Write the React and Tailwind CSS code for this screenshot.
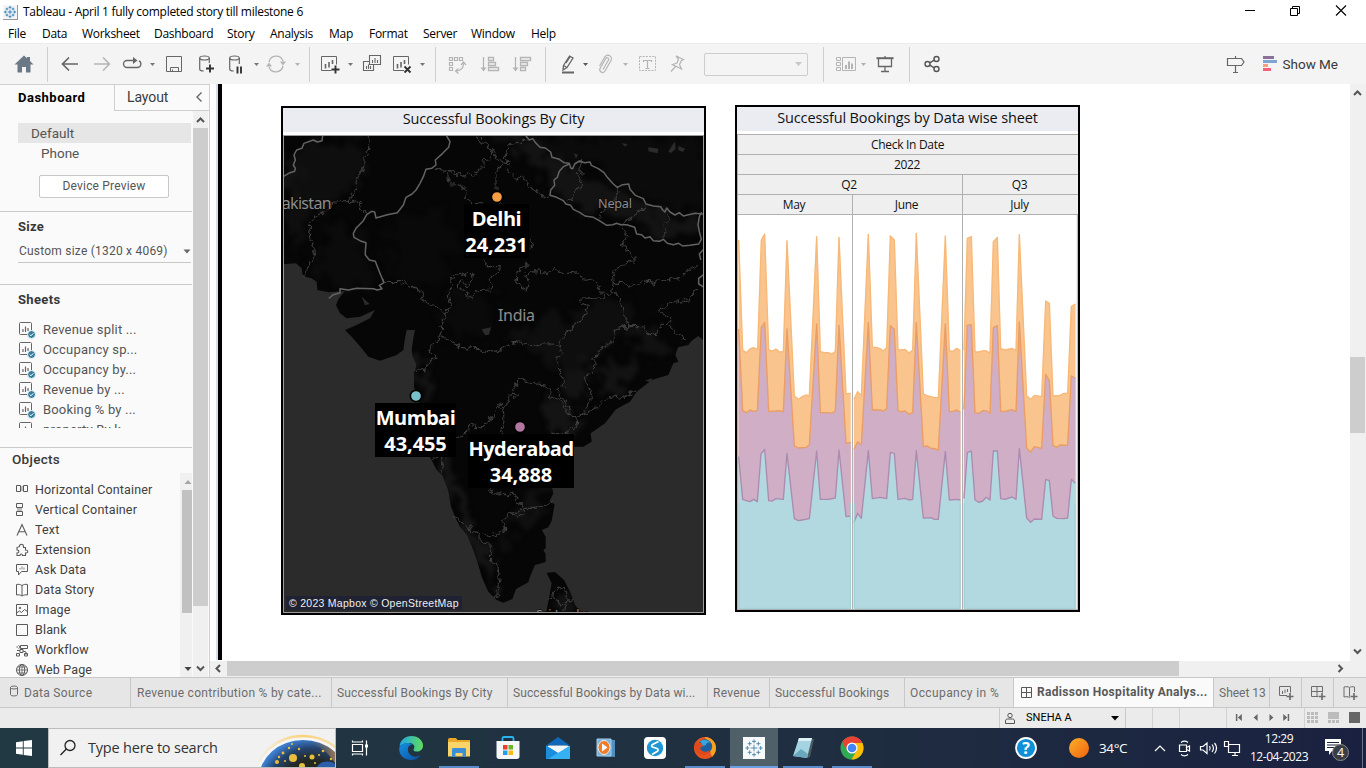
import React from "react";

const SEG = "font-['Open_Sans','Noto_Sans',sans-serif]";
const BEN = "font-['Roboto','Liberation_Sans',sans-serif]";

/* ---------- shared bits ---------- */
function Icon({ className = "", size = 22, children, ...rest }) {
  return (
    <svg width={size} height={size} viewBox={`0 0 ${size} ${size}`} fill="none" stroke="currentColor" className={`block shrink-0 ${className}`} {...rest}>
      {children}
    </svg>
  );
}

function Caret({ className = "text-[#777]" }) {
  return (
    <svg width="12" height="12" viewBox="0 0 12 12" className={`block shrink-0 ${className}`}>
      <path d="M4 5h5L6.500 8z" fill="currentColor" />
    </svg>
  );
}

function Sep({ className = "" }) {
  return <div className={`h-[35px] w-px shrink-0 bg-[#cfcfcf] ${className}`} />;
}

function Slot({ className = "", children }) {
  return <div className={`flex shrink-0 items-center justify-center ${className}`}>{children}</div>;
}

function TableauMark({ className = "", size = 14, weight = 1.5 }) {
  const plus = [
    [12, 12, 4], [12, 4, 2.4], [12, 20, 2.4], [4, 12, 2.4], [20, 12, 2.4],
    [6.8, 6.8, 2.4], [17.2, 6.8, 2.4], [6.8, 17.2, 2.4], [17.2, 17.2, 2.4],
  ];
  return (
    <svg width={size} height={size} viewBox="0 0 24 24" className={`block ${className}`} stroke="currentColor" strokeWidth={weight}>
      {plus.map(([x, y, r], i) => (
        <path key={i} d={`M${x - r} ${y}h${r * 2}M${x} ${y - r}v${r * 2}`} />
      ))}
    </svg>
  );
}

/* ---------- title + menu ---------- */
function TitleBar() {
  return (
    <div className="flex h-6 items-center bg-white pl-[3px]">
      <div className="flex h-[15px] w-[15px] items-center justify-center border-r border-b border-[#999] bg-[#f2f5f8]">
        <TableauMark className="text-[#2f7ab0]" size={14} />
      </div>
      <span className="ml-[5px] text-[12px] leading-6 tracking-[-0.28px] text-black">Tableau - April 1 fully completed story till milestone 6</span>
      <svg width="110" height="20" viewBox="0 0 110 20" className="ml-auto mr-[13px]" fill="none" stroke="#000">
        <path d="M2 8.500h10" />
        <path d="M47.500 6.500h7v7h-7z M49.500 6.500v-2h7v7h-2" />
        <path d="M93 3.500l10 10M103 3.500l-10 10" strokeWidth="1.100" />
      </svg>
    </div>
  );
}

function MenuBar() {
  const items = [
    ["File", "w-[34px]"], ["Data", "w-[40px]"], ["Worksheet", "w-[72px]"], ["Dashboard", "w-[73px]"],
    ["Story", "w-[43px]"], ["Analysis", "w-[59px]"], ["Map", "w-[40px]"], ["Format", "w-[54px]"],
    ["Server", "w-[48px]"], ["Window", "w-[60px]"], ["Help", "w-[40px]"],
  ];
  return (
    <div className="flex h-[19px] items-center bg-white pl-2 text-[12px] tracking-[-0.28px] text-black">
      {items.map(([t, w]) => (
        <span key={t} className={`${w} shrink-0 leading-[19px]`}>{t}</span>
      ))}
    </div>
  );
}

/* ---------- toolbar ---------- */
const chartBox = "M1.500 3.500h15v14h-15z";
function Toolbar() {
  return (
    <div className="flex h-[41px] items-center border-t border-[#ececec] bg-[#f4f4f4] text-[#666]">
      <Slot className="w-[47px]">
        <Icon><path d="M11 2.500L1.500 11.500H4.500V19.500H9V14H13V19.500H17.500V11.500H20.500L17 8V4h-3v1.300z" fill="#6b7886" stroke="none" /></Icon>
      </Slot>
      <Sep />
      <Slot className="ml-1.5 w-8"><Icon strokeWidth="1.700"><path d="M19 11H3.500M10 4.500L3.500 11l6.500 6.500" /></Icon></Slot>
      <Slot className="w-8 text-[#b4b4b4]"><Icon strokeWidth="1.500"><path d="M3 11h15.500M12 4.500l6.500 6.500-6.500 6.500" /></Icon></Slot>
      <Slot className="w-7"><Icon strokeWidth="1.300"><path d="M14 7.500H6a3.500 3.500 0 0 0 0 7h10.500a3.500 3.500 0 0 0 1.500-6.600" /><path d="M12 4l4.500 3.500-4.500 3.500z" fill="currentColor" stroke="none" /></Icon></Slot>
      <Caret />
      <Slot className="w-8"><Icon><path d="M3.500 3.500h15v15h-15z M7.500 18.500v-4h8v4 M9.500 18.500v-2" /></Icon></Slot>
      <Slot className="w-8"><Icon strokeWidth="1.200"><ellipse cx="9.500" cy="5" rx="4.800" ry="2" /><path d="M4.700 5v11c0 1 1 2 4 2M14.300 5v5" /><path d="M15 11.500v8M11 15.500h8" stroke="#333" strokeWidth="1.900" /></Icon></Slot>
      <Slot className="w-7"><Icon strokeWidth="1.200"><ellipse cx="9.500" cy="5" rx="4.800" ry="2" /><path d="M4.700 5v11c0 1 1 2 4 2M14.300 5v6" /><path d="M12.500 13.500v7M16 13.500v7" stroke="#333" strokeWidth="1.900" /></Icon></Slot>
      <Caret />
      <Slot className="w-7 text-[#b4b4b4]"><Icon strokeWidth="1.300"><path d="M4 9a7.300 7.300 0 0 1 14-1M18 13a7.300 7.300 0 0 1-14 1" /><path d="M15 8.500h6l-3 4zM1 13.500h6l-3-4z" fill="currentColor" stroke="none" /></Icon></Slot>
      <Caret className="ml-px text-[#b4b4b4]" />
      <Sep className="ml-1.5" />
      <Slot className="ml-1.5 w-7"><Icon><path d="M12.500 17.500H2.500v-14h15v8" /><path d="M6.500 11v4.500M10 9v5.500M13.500 7v4" strokeWidth="1.600" /><path d="M16.500 12.500v8M12.500 16.500h8" stroke="#333" strokeWidth="1.900" /></Icon></Slot>
      <Caret />
      <Slot className="ml-0.5 w-7"><Icon strokeWidth="1.100"><path d="M8.500 2.500h11v9h-11z M8.500 8.500h-6v9h10v-6" /><path d="M11.500 7v3M14 5v5M16.500 7v3M5.500 13v3M7.500 11.500v4.500M9.500 13v3" /></Icon></Slot>
      <Slot className="ml-0.5 w-7"><Icon><path d="M13 17.500H2.500v-14h15v8" /><path d="M6.500 11v4.500M10 9v5.500M13.500 7v4" strokeWidth="1.600" /><path d="M13.500 13.500l6 6M19.500 13.500l-6 6" stroke="#333" strokeWidth="1.900" /></Icon></Slot>
      <Caret />
      <Sep className="ml-[7px]" />
      <Slot className="ml-[7px] w-7 text-[#b4b4b4]"><Icon strokeWidth="1.200"><path d="M3.500 4.500h3v3h-3zM8.500 4.500h3v3h-3zM13.500 4.500h3v3h-3zM3.500 9.500h3v3h-3zM3.500 14.500h3v3h-3z" /><path d="M17.500 10.500c0 5-2 7-7 7.500M15 12l2.500-3 2.500 3M12.500 15.500l-3 2.500 3 2.500" /></Icon></Slot>
      <Slot className="ml-[5px] w-7 text-[#b4b4b4]"><Icon strokeWidth="1.300"><path d="M4.500 4v13M9.500 4.500h5v3h-5zM9.500 9.500h7v3h-7zM9.500 14.500h10v3h-10z" /><path d="M1.500 14.500h6l-3 4z" fill="currentColor" stroke="none" /></Icon></Slot>
      <Slot className="ml-1 w-7 text-[#b4b4b4]"><Icon strokeWidth="1.300"><path d="M4.500 4v13M9.500 4.500h10v3h-10zM9.500 9.500h7v3h-7zM9.500 14.500h5v3h-5z" /><path d="M1.500 14.500h6l-3 4z" fill="currentColor" stroke="none" /></Icon></Slot>
      <Sep className="ml-[9px]" />
      <Slot className="ml-[11px] w-[22px]"><Icon strokeWidth="1.300"><path d="M6.500 12.500l6-9.500 3.500 2-6 9.500-4 2.500zM6.500 12.500l3.500 2M9 10l4-6" /><path d="M5 19.500h12" strokeWidth="2" /></Icon></Slot>
      <Caret className="text-[#555]" />
      <Slot className="ml-[3px] w-[22px] text-[#b4b4b4]"><Icon strokeWidth="1.200"><path d="M9 16.500l5.500-9.500a1.500 1.500 0 0 0-2.700-1.500L6 15.500a2.800 2.800 0 0 0 5 2.500l6-10.500a3.500 3.500 0 0 0-6.200-3.500L5.500 13" /></Icon></Slot>
      <Caret className="ml-[3px] text-[#b4b4b4]" />
      <Slot className="ml-[5px] w-[22px] text-[#b4b4b4]"><Icon><path d="M3.500 3.500h16v14h-16z" strokeDasharray="2 1.200" /><path d="M7.500 9V7.500h8V9M11.500 7.500v8M9.500 15.500h4" strokeWidth="1.200" /></Icon></Slot>
      <Slot className="ml-2 w-[22px] text-[#b4b4b4]"><Icon strokeWidth="1.200"><path d="M10 3l7.500 3.500-2 1-2 4 2 4.500-9-4.500 4.500-1.500 1.500-4zM9.500 13.500L5 18.500" /></Icon></Slot>
      <div className="ml-4 flex h-[23px] w-[104px] shrink-0 items-center justify-end rounded-[2px] border border-[#cdcdcd] pr-[4px]">
        <svg width="9" height="6" viewBox="0 0 9 6"><path d="M1 1h7L4.500 5z" fill="#c6c6c6" /></svg>
      </div>
      <Sep className="ml-[15px]" />
      <Slot className="ml-3 w-[22px] text-[#b4b4b4]"><Icon><path d="M.5 4.500h4v3h-4zM.5 9.500h4v3h-4zM.5 14.500h4v3h-4zM6.500 4.500h13v13h-13z" /><path d="M10 12v4M13 8.500V16M16 10.500V16" strokeWidth="2" /></Icon></Slot>
      <Caret className="-ml-px text-[#b0b0b0]" />
      <Slot className="ml-[5px] w-[22px]"><Icon strokeWidth="1.300"><path d="M2.500 5.200h17" strokeWidth="2" /><path d="M4.500 6v7.500h13V6M11 13.500v5M7 18.500h8M11 3v2" /></Icon></Slot>
      <Sep className="ml-[13px]" />
      <Slot className="ml-[11px] w-[22px] text-[#555]"><Icon strokeWidth="1.400"><circle cx="6.500" cy="11" r="2.500" /><circle cx="15.500" cy="6" r="2.500" /><circle cx="15.500" cy="16" r="2.500" /><path d="M8.700 9.800l4.600-2.600M8.700 12.200l4.600 2.600" /></Icon></Slot>
      <Slot className="ml-auto w-[22px]"><Icon><path d="M3.500 5.500h14l2.500 3.500-2.500 3.500h-14zM11.500 3v2.500M11.500 12.500v7M9 19.500h5" strokeWidth="1.200" /></Icon></Slot>
      <svg width="16" height="16" viewBox="0 0 16 16" className="ml-[16px]">
        <path d="M1 0h11v3H1z" fill="#8b719a" /><path d="M1 4h14v3H1z" fill="#7fa3d2" /><path d="M1 8h5v3H1z" fill="#f4a07f" /><path d="M1 12h8v3H1z" fill="#f4617a" />
      </svg>
      <span className={`mr-[28px] ml-[5px] text-[13.500px] leading-[18px] tracking-[-0.02px] text-[#383838] ${BEN}`}>Show Me</span>
    </div>
  );
}

/* ---------- left panel ---------- */
function SheetIcon() {
  return (
    <svg width="18" height="18" viewBox="0 0 18 18" fill="none" className="block shrink-0">
      <rect x="1.500" y="1.500" width="12" height="12" rx="1" stroke="#666" />
      <path d="M5 8v3M7.500 5.500V11M10 7v3" stroke="#666" strokeWidth="1.200" />
      <circle cx="13.500" cy="13.500" r="4" fill="#35809f" stroke="#fafafa" />
      <path d="M11.700 13.500l1.300 1.300 2.300-2.500" stroke="#fff" strokeWidth="1" />
    </svg>
  );
}

const objectIcons = {
  h: <><path d="M1.500 2.500h4v6h-4zM8.500 2.500h4v6h-4z" /><path d="M6 3h2v5H6z" fill="#bbb" stroke="none" /></>,
  v: <><path d="M1.500.5h6v4h-6zM1.500 8.500h6v4h-6z" /><path d="M2 5h5v3H2z" fill="#bbb" stroke="none" /></>,
  t: <path d="M2 12.500L7 1.500l5 11M4 8.800h6" strokeWidth="1.100" />,
  e: <path d="M4.500 3.500c0-3 4-3 4 0v1h2v2.500c3-.5 3 3.500 0 3v2.500h-3c0-2-2.500-2-2.500 0h-3V10c2.500 0 2.500-3 0-3V4.500z" strokeWidth="1.100" />,
  a: <><path d="M1.500 1.500h11v7h-6l-3 3.500v-3.500h-2z" /><path d="M5 6.500V5M7 6.500V3.500M9 6.500V4.500" stroke="#aaa" strokeWidth="1.500" /></>,
  d: <path d="M1.500 1.500c2-.5 4 0 5.500 1 1.500-1 3.500-1.500 5.500-1v10.500c-2-.5-4 0-5.500 1-1.500-1-3.500-1.500-5.500-1zM7 2.500V12.500" />,
  i: <><path d="M1.500 1.500h11v11h-11zM1.500 10l3-2 2 1.500 3-3 3 2" /><circle cx="5" cy="5" r=".8" /></>,
  b: <path d="M1.500 1.500h11v11h-11z" />,
  w: <path d="M5.500 2.500h7v3h-7zM3 4H1.500M3.500 2.500l2 1.500-2 1.500M2 7.500h3M5 6.500h3v3H5zM8 8l3 1v3M1.500 10.500h3v2.500h-3zM9.500 10.500h3v2.500h-3z" />,
  g: <><circle cx="7" cy="7" r="5.500" /><ellipse cx="7" cy="7" rx="2.700" ry="5.500" /><path d="M1.500 7h11M7 1.500v11M2.500 4h9M2.500 10h9" strokeWidth=".8" /></>,
};

function LeftPanel() {
  const sheets = ["Revenue split ...", "Occupancy sp...", "Occupancy by...", "Revenue by ...", "Booking % by ...", "property By k..."];
  const objects = [
    ["h", "Horizontal Container"], ["v", "Vertical Container"], ["t", "Text"], ["e", "Extension"], ["a", "Ask Data"],
    ["d", "Data Story"], ["i", "Image"], ["b", "Blank"], ["w", "Workflow"], ["g", "Web Page"],
  ];
  return (
    <div className={`flex h-[593px] w-[210px] shrink-0 flex-col border-t border-r border-[#d0d0d0] bg-[#fafafa] text-[13px] text-[#555] ${BEN}`}>
      <div className="flex h-[26px] shrink-0">
        <div className="w-[114px] pl-[18px] text-[13px] leading-[25px] font-bold tracking-[0.5px] text-black">Dashboard</div>
        <div className="flex flex-1 items-center border-b border-l border-[#cfcfcf] bg-[#fafafa] pl-3 text-[14px] tracking-[-0.1px] text-[#3c3c3c]">
          Layout
          <svg width="8" height="12" viewBox="0 0 8 12" className="mr-[6px] mb-[2px] ml-auto" fill="none" stroke="#666" strokeWidth="1.400"><path d="M6.500 1.500L2 6l4.500 4.500" /></svg>
        </div>
      </div>
      <div className="flex min-h-0 flex-1">
        <div className="flex w-[192px] flex-col overflow-hidden">
          <div className="mt-3 ml-[18px] h-5 w-[173px] shrink-0 bg-[#e6e6e6] pl-[13px] text-[13.500px] leading-[20px]">Default</div>
          <div className="h-5 shrink-0 pl-[41px] text-[13.500px] leading-[20px]">Phone</div>
          <div className="mt-3 ml-[39px] h-[23px] w-[130px] shrink-0 rounded-[2px] border border-[#c8c8c8] bg-white text-center text-[12px] leading-[21px] tracking-[0.18px]">Device Preview</div>
          <div className="mt-[13px] h-[73px] shrink-0 border-t border-[#cacaca] pt-[5px]">
            <div className="pl-[18px] text-[13px] leading-[20px] font-bold tracking-[0.3px] text-[#383838]">Size</div>
            <div className="mt-[4px] ml-[18px] flex h-[22px] w-[173px] items-center border-b border-[#c8c8c8] pb-px pl-px text-[12px] tracking-[0.22px]">
              Custom size (1320 x 4069)
              <svg width="8" height="5" viewBox="0 0 8 5" className="ml-auto"><path d="M.5.500h7L4 4.500z" fill="#666" /></svg>
            </div>
          </div>
          <div className="h-[163px] shrink-0 border-t border-[#cacaca] pt-[5px]">
            <div className="pl-[18px] text-[13px] leading-[20px] font-bold tracking-[0.35px] text-[#383838]">Sheets</div>
            <div className="mt-[10px] h-[108px] overflow-hidden">
              {sheets.map((s) => (
                <div key={s} className="flex h-5 items-center pl-[18px] text-[13px] tracking-[0.18px]">
                  <SheetIcon />
                  <span className="ml-[7px]">{s}</span>
                </div>
              ))}
            </div>
          </div>
          <div className="flex min-h-0 flex-1 flex-col border-t border-[#cacaca]">
            <div className="h-[25px] shrink-0 pl-3 text-[13.500px] leading-[23px] font-medium tracking-[0.3px] text-[#383838]">Objects</div>
            <div className="flex min-h-0 flex-1">
              <div className="w-[180px] overflow-hidden pt-[7px]">
                {objects.map(([k, t]) => (
                  <div key={k} className="flex h-5 items-center pl-[15px] text-[12.500px] tracking-[0.15px] text-[#404040]">
                    <Icon size={14} className="text-[#5a5a5a]">{objectIcons[k]}</Icon>
                    <span className="ml-[6px] whitespace-nowrap">{t}</span>
                  </div>
                ))}
              </div>
              <div className="flex w-3 flex-col items-end bg-[#f0f0f0]">
                <svg width="10" height="17" viewBox="0 0 10 17"><path d="M2.500 11h7L6 7z" fill="#a5a5a5" /></svg>
                <div className="h-[123px] w-[10px] bg-[#c1c1c1]" />
                <svg width="10" height="17" viewBox="0 0 10 17" className="mt-auto"><path d="M2.500 7h7L6 11z" fill="#444" /></svg>
              </div>
            </div>
          </div>
        </div>
        <div className="ml-px flex w-[15px] flex-col items-center bg-[#f0f0f0]">
          <svg width="15" height="17" viewBox="0 0 15 17" fill="none" stroke="#555" strokeWidth="2"><path d="M4 11l3.500-3.500L11 11" /></svg>
          <div className="h-[478px] w-full bg-[#cdcdcd]" />
          <svg width="15" height="17" viewBox="0 0 15 17" className="mt-auto" fill="none" stroke="#555" strokeWidth="2"><path d="M4 6.500L7.500 10 11 6.500" /></svg>
        </div>
      </div>
    </div>
  );
}

/* ---------- map ---------- */
const LAND =
  "M12 100V492L48 490L65 505L68 528L95 535L110 545L112 570L145 577L195 573L175 598L168 615L180 640L200 655L240 650L285 630L270 655L230 675L195 690L215 710L245 745L265 770L300 782L350 765L370 750L375 715L380 690L405 690L400 715L395 750L398 768L410 795L402 820L402 860L410 885L425 935L432 990L450 1070L470 1110L487 1125L505 1170L513 1220L525 1250L540 1280L562 1305L580 1350L590 1378L605 1430L625 1475L650 1500L670 1508L697 1497L708 1467L745 1447L750 1430L765 1395L797 1386L797 1362L790 1350L797 1345L797 1310L785 1290L805 1282L815 1262L824 1212L808 1205L820 1180L815 1160L817 1130L840 1080L880 1040L910 1040L935 1025L932 1000L975 970L1008 928L1050 905L1070 875L1115 840L1165 825L1180 790L1195 785L1186 765L1194 742L1225 735L1235 722L1255 708L1269 720V100Z M800 1418L825 1416L852 1440L870 1475L885 1515L905 1540H798L808 1490L815 1450L806 1432Z";

const COUNTRY = [
  "M128 108L126 122L112 126L100 120L72 130L66 145L50 150L42 165L46 180L40 195L46 205L44 214L30 218L12 228",
  "M500 108L510 125L506 142L488 160L466 180L468 195L455 205L438 208L430 230L420 250L408 270L396 282L378 292L370 315L352 338L322 344L288 354L284 336L275 334L260 344L250 362L228 385L220 400L222 412L240 422L258 428L256 455L256 465L268 480L286 484L294 505L302 525L312 548L298 556L306 566L292 570L280 566L230 565L205 570L180 566L180 578L160 584L148 594",
  "M738 108L748 120L758 116L768 130L780 142L796 144L812 156L816 172L838 178L852 188L868 190L872 204L878 206L884 192L898 183L914 188L930 186L934 196L955 206L972 218L982 232L1000 252L1012 262L1028 254L1046 252L1050 268L1066 286L1090 296L1098 312L1120 318L1142 320L1148 330L1155 336L1160 324L1170 336L1185 345L1198 338L1210 348L1245 340L1269 342",
  "M868 192L850 200L838 214L832 232L822 240L824 256L812 270L810 286L830 292L850 302L858 312L872 316L880 328L900 338L915 348L940 352L958 362L980 376L998 374L1010 370L1022 374L1040 374L1064 382L1070 402L1085 404L1095 414L1110 410L1120 422L1138 424L1150 418L1162 430L1180 434L1196 430L1208 438L1230 436L1256 432L1264 418L1258 395L1254 374L1258 350L1264 338",
  "M1269 450L1258 462L1262 478M1269 525L1256 535L1256 552L1269 560",
];

const STATES = [
  "M268 108L265 160L255 180L248 215L228 238L230 262L215 290L210 304L160 306L150 325L130 340L108 344L92 370L88 410L100 440L105 470L85 500L68 528",
  "M210 304L240 308L242 325L260 342",
  "M590 108L602 124L620 128L636 150L632 175L610 180L608 204L595 204L580 226L562 222L540 232L530 218L515 212L466 208",
  "M515 212L500 224L505 250L548 258L554 275L555 290L575 308L640 320L660 305L668 315",
  "M625 135L640 155L655 180L670 185L690 190L682 210L690 220L706 234L730 232L745 255L760 270L785 284L810 290",
  "M738 118L710 130L684 135L678 165L684 190L665 190L648 215L648 268",
  "M898 184L904 218L886 222L906 240L902 262L880 280L872 296L862 300",
  "M1010 262L1004 300L980 325L964 345L955 360M1098 318L1060 348L1030 370M1160 340L1168 355L1154 375L1155 415",
  "M1022 376L1040 410L1026 435L1040 446L1068 480L1052 480L1030 495L996 515L1000 550L995 575L968 592L920 590L898 602L925 620L905 660L865 690L840 730L845 760L828 780L840 815L856 850L830 870L850 895L875 950L895 950",
  "M310 545L360 545L400 560L425 575L430 600L458 620L485 628L495 650L485 680L480 712L460 730L448 752L470 770L440 795L435 815L405 810",
  "M495 640L515 620L505 590L515 550L518 525L545 520L560 528L575 518L580 540L560 560L540 540L535 560L560 580L572 594L590 572L635 570L630 535L655 518L658 500L625 500L610 480M752 418L758 436L750 450",
  "M480 710L530 730L535 742L590 745L620 758L655 752L680 738L720 725L755 740L805 728L840 740",
  "M742 485L732 500L712 515L708 545L740 572L746 550L732 520L760 515L800 520L822 505L850 522L895 515L915 540L950 545L962 575",
  "M1000 550L1030 550L1055 562L1090 545L1120 550L1160 535L1195 540L1230 505L1250 500",
  "M1000 575L1024 600L1030 640L1048 680L1010 685L1000 725L965 740L942 780L940 820L910 825L935 880L925 920L895 950L950 920L990 890L1020 895L1065 875",
  "M1250 570L1220 600L1170 610L1135 628L1175 660L1175 690L1220 725M1030 680L1060 680L1090 680L1100 700L1130 700L1145 675L1172 665",
  "M530 1010L562 1000L566 975L605 985L635 950L650 920L680 915L700 870L715 835L750 850L800 855L812 890L842 900L860 940L895 955L890 980L860 1000L815 1000",
  "M668 920L672 960L665 998M685 885L700 880L718 886L700 896",
  "M520 1247L560 1280L600 1305L630 1310L660 1300L680 1285L668 1265L690 1240L725 1250L735 1225L765 1225L800 1215L815 1205",
  "M635 1165L640 1190L660 1180L680 1190L700 1180L720 1215L728 1230L700 1240",
  "M600 1310L600 1325L630 1330L632 1385L652 1390L658 1430L650 1490",
  "M460 1075L480 1070L490 1095L485 1120M805 1500L830 1470L855 1460L865 1500L850 1536M820 1490L845 1515L880 1500",
];

const PATCHES = [
  ["M20 190L100 110L250 108L255 200L210 290L110 330L90 400L20 480Z", "#0e0e0e"],
  ["M12 150L60 240L40 330L20 300Z", "#121212"],
  ["M120 350L200 360L260 470L300 545L180 565L100 530Z", "#0b0b0b"],
  ["M640 140L720 150L800 250L870 310L960 350L1050 370L1240 425L1250 350L1100 320L1000 265L880 200L740 112L640 108Z", "#131313"],
  ["M760 108H1269V330L1090 290L1000 240L890 180L830 170Z", "#0b0b0b"],
  ["M330 380L460 330L540 380L520 480L420 560L330 540Z", "#090909"],
  ["M480 640L560 570L640 590L600 700L500 710Z", "#0a0a0a"],
  ["M680 700L780 660L880 650L920 610L990 590L1060 600L1050 680L1000 730L940 760L930 830L880 860L840 800L760 760Z", "#0e0e0e"],
  ["M850 820L900 770L930 800L920 900L880 930Z", "#131313"],
  ["M950 800L1040 770L1090 780L1060 850L990 880L960 860Z", "#131313"],
  ["M1060 700L1120 680L1170 700L1130 760L1070 750Z", "#111"],
  ["M790 910L840 910L870 960L930 960L890 1000L820 990Z", "#141414"],
  ["M410 770L450 780L445 850L460 960L530 1110L570 1240L620 1330L650 1400L640 1490L610 1420L560 1300L510 1200L470 1100L430 980Z", "#151515"],
  ["M720 1165L800 1165L780 1250L710 1270L680 1250L720 1220Z", "#101010"],
  ["M650 1320L700 1300L700 1350L660 1380Z", "#0d0d0d"],
  ["M825 1480L865 1475L880 1536H820Z", "#131313"],
];

const LAKES =
  "M1025 130l18 2-8 8zM1105 142l30 4-2 14-28-6zM1165 155l12-20 8-10 2 22-14 12zM1195 138l20 8-6 10-14-6zM882 160l12 4-6 12zM605 688l28-6-6 22-12 2zM245 590l24 22-14 4zM955 572l22 4-14 10zM735 486l16 10-16 12zM1095 842l22-8-6 12zM640 1180l26-6-6 14z";

function PlaceLabel({ name, value, className }) {
  return (
    <div className={`absolute flex flex-col items-center bg-black text-[20px] leading-[26px] font-bold text-white ${className}`}>
      <span className="tracking-[-0.5px]">{name}</span>
      <span className="tracking-[-0.1px]">{value}</span>
    </div>
  );
}

function MapPanel() {
  return (
    <div className="flex h-[509px] w-[425px] flex-col border-2 border-black bg-white">
      <div className="h-6 bg-[#ebecf1] text-center text-[14.500px] leading-[22px] tracking-[-0.13px] text-[#111]">Successful Bookings By City</div>
      <div className="relative mt-[3px] h-[478px] w-[421px] overflow-hidden border border-[#9c9c9c] bg-[#2b2b2b]">
        <svg width="419" height="476" viewBox="12 108 1257 1428" className="block" strokeLinejoin="round" strokeLinecap="round">
          <defs>
            <clipPath id="land"><path d={LAND} /></clipPath>
            <filter id="soft" filterUnits="userSpaceOnUse" x="-50" y="50" width="1400" height="1550" colorInterpolationFilters="sRGB">
              <feTurbulence type="fractalNoise" baseFrequency=".018" numOctaves="3" seed="8" result="n" />
              <feDisplacementMap in="SourceGraphic" in2="n" scale="130" xChannelSelector="R" yChannelSelector="G" />
              <feGaussianBlur stdDeviation="6" />
            </filter>
            <filter id="rough" filterUnits="userSpaceOnUse" x="-50" y="50" width="1400" height="1550" colorInterpolationFilters="sRGB">
              <feTurbulence type="fractalNoise" baseFrequency=".06" numOctaves="2" seed="3" result="n" />
              <feDisplacementMap in="SourceGraphic" in2="n" scale="26" xChannelSelector="R" yChannelSelector="G" />
            </filter>
          </defs>
          <path d={LAND} fill="#060606" />
          <g clipPath="url(#land)">
            <g filter="url(#soft)">
              {PATCHES.map(([d, c], i) => <path key={i} d={d} fill={c} />)}
            </g>
          </g>
          <path d={LAKES} fill="#2b2b2b" />
          <g fill="none" stroke="#3d3d3d" strokeWidth="3.300" filter="url(#rough)">
            {STATES.map((d, i) => <path key={i} d={d} />)}
          </g>
          <g fill="none" stroke="#636363" strokeWidth="4.500">
            {COUNTRY.map((d, i) => <path key={i} d={d} />)}
          </g>
          <g fill="#8c8c8c" stroke="#0a0a0a" strokeWidth="4" paintOrder="stroke" fontFamily="Noto Sans, Open Sans, sans-serif">
            <text x="-22" y="326" fontSize="48" textLength="177">Pakistan</text>
            <text x="954" y="323" fontSize="38" textLength="102">Nepal</text>
            <text x="654" y="664" fontSize="48" textLength="111">India</text>
            <text x="768" y="1557" fontSize="38">Sri Lanka</text>
          </g>
          <g stroke="#000" strokeWidth="5">
            <circle cx="651" cy="291" r="17" fill="#f79d42" />
            <circle cx="408" cy="888" r="17" fill="#7ac0cb" />
            <circle cx="720" cy="981" r="17" fill="#b177a0" />
          </g>
        </svg>
        <PlaceLabel name="Delhi" value="24,231" className="top-[68px] left-[180px] h-[54px] w-[65px] pt-[2px]" />
        <PlaceLabel name="Mumbai" value="43,455" className="top-[267px] left-[91px] h-[54px] w-[81px] pt-[2px]" />
        <PlaceLabel name="Hyderabad" value="34,888" className="top-[298px] left-[184px] h-[54px] w-[106px] pt-[2px]" />
        <div className="absolute bottom-[2px] left-[2px] h-[14px] w-[176px] bg-[#1f2232] pl-[3px] font-['Liberation_Sans',sans-serif] text-[10.500px] leading-[14px] tracking-[0.27px] whitespace-nowrap text-[#eee]">© 2023 Mapbox © OpenStreetMap</div>
      </div>
    </div>
  );
}

/* ---------- area chart ---------- */
const MONTHS = [
  {
    o: "26,420 38,750 49,758 60,747 71,743 83,748 94,420 104,402 116,750 127,753 138,747 149,756 160,755 171,422 193,888 206,898 216,890 228,885 238,888 260,410 271,755 283,758 295,758 305,762 316,755 327,412 348,882 360,880 362,880",
    p: "26,687 38,932 49,938 60,930 71,934 82,932 94,682 104,668 116,934 138,933 149,932 160,936 171,687 193,1038 205,1044 228,1042 238,1035 260,672 271,938 295,938 305,940 316,932 327,676 348,1030 362,1027",
    t: "26,1070 38,1198 49,1202 60,1205 71,1198 82,1205 93,1062 104,1048 116,1202 127,1203 138,1196 160,1198 171,1060 193,1256 205,1262 216,1260 238,1256 260,1053 271,1198 295,1198 316,1194 327,1050 348,1250 362,1248",
    l: 26, r: 362,
  },
  {
    o: "372,897 383,875 394,887 415,403 427,742 438,742 450,746 460,753 470,742 481,408 493,420 504,750 515,750 525,748 537,760 548,750 559,400 580,882 592,887 613,893 625,893 646,408 658,752 669,754 680,745 691,752",
    p: "372,1048 383,1025 394,1035 415,668 427,930 450,930 460,933 470,926 481,677 493,688 504,932 515,935 525,933 537,943 548,938 559,668 580,1040 592,1038 604,1046 613,1045 625,1051 646,672 658,935 669,934 680,930 691,936",
    t: "372,1267 383,1240 394,1255 415,1052 427,1196 450,1192 470,1196 481,1057 493,1060 504,1198 525,1195 537,1200 548,1198 559,1052 580,1254 604,1253 613,1258 625,1258 646,1054 658,1200 680,1198 691,1200",
    l: 372, r: 691,
  },
  {
    o: "702,750 712,415 724,410 735,756 747,756 760,752 770,753 780,760 790,425 802,412 812,746 825,750 846,745 858,752 868,404 890,888 902,898 913,886 935,890 947,603 958,610 969,888 990,886 1002,880 1013,880 1024,620 1036,612",
    p: "702,928 712,676 724,674 735,938 747,940 758,932 769,932 780,940 790,683 802,677 812,934 825,934 846,929 858,935 868,666 890,1045 902,1056 913,1040 935,1045 947,823 958,842 969,1036 980,1042 990,1035 1013,1036 1024,828 1036,834",
    t: "702,1195 712,1058 724,1053 735,1200 747,1207 758,1203 769,1192 780,1200 790,1053 802,1053 812,1196 825,1198 846,1191 858,1198 868,1046 890,1254 902,1267 913,1257 935,1258 947,1138 958,1142 969,1248 980,1255 1002,1256 1013,1254 1024,1138 1036,1150",
    l: 702, r: 1036,
  },
];

function Series({ pts, l, r, fill, stroke }) {
  return (
    <>
      <polygon points={`${l},1526 ${pts} ${r},1526`} fill={fill} stroke={fill} strokeWidth="1" />
      <polyline points={pts} fill="none" stroke={stroke} strokeWidth="4" />
    </>
  );
}

function ChartPanel() {
  const cell = "border-b border-[#b0b0b0] bg-[#efefef] text-center leading-[19px]";
  return (
    <div className="flex h-[507px] w-[345px] flex-col border-2 border-black bg-white">
      <div className="h-6 bg-[#ebecf1] text-center text-[14.500px] leading-[22px] tracking-[-0.14px] text-[#111]">Successful Bookings by Data wise sheet</div>
      <div className="mt-[3px] grid h-[81px] grid-cols-[115px_110px_115px] grid-rows-4 border-t border-r border-l border-[#b0b0b0] text-[12px] tracking-[-0.3px] text-[#111]">
        <div className={`${cell} col-span-3 pr-px`}>Check In Date</div>
        <div className={`${cell} col-span-3 pr-[2px]`}>2022</div>
        <div className={`${cell} col-span-2 border-r pr-[2px]`}>Q2</div>
        <div className={`${cell} pr-[2px]`}>Q3</div>
        <div className={`${cell} border-r pr-[2px]`}>May</div>
        <div className={`${cell} border-r pr-[2px]`}>June</div>
        <div className={`${cell} pr-[2px]`}>July</div>
      </div>
      <svg width="341" height="395" viewBox="21 345 1023 1185" className="block" strokeLinejoin="round">
        {MONTHS.map((m) => (
          <g key={m.l}>
            <Series pts={m.o} l={m.l} r={m.r} fill="#f9c48d" stroke="#f8b978" />
            <Series pts={m.p} l={m.l} r={m.r} fill="#cfaec6" stroke="#ea9e64" />
            <Series pts={m.t} l={m.l} r={m.r} fill="#b2d9df" stroke="#ac8bb0" />
            <path d={`M${m.l + 1} 1210V1525H${m.r - 1}V1210`} fill="none" stroke="#9fd0d7" strokeWidth="3" />
          </g>
        ))}
        <path d="M22.500 345V1530M367.500 345V1530M697.500 345V1530M1042 345V1530M21 1528.500H1044" stroke="#b0b0b0" strokeWidth="3" fill="none" />
      </svg>
    </div>
  );
}

/* ---------- canvas ---------- */
function Canvas() {
  return (
    <div className="flex h-[593px] flex-1 flex-col bg-white">
      <div className="flex h-[577px]">
        <div className="ml-[6px] h-[576px] w-[2px] shrink-0 bg-[#d3dfee]" />
        <div className="h-[576px] w-[4px] shrink-0 bg-black" />
        <div className="pt-[22px] pl-[59px]"><MapPanel /></div>
        <div className="pt-[21px] pl-[29px]"><ChartPanel /></div>
        <div className="ml-auto flex h-[577px] w-4 flex-col bg-[#f0f0f0]">
          <svg width="16" height="17" viewBox="0 0 16 17" fill="none" stroke="#555" strokeWidth="2"><path d="M4 11l3.500-3.500L11 11" /></svg>
          <div className="mt-[256px] h-[76px] w-[15px] bg-[#cdcdcd]" />
          <svg width="16" height="17" viewBox="0 0 16 17" className="mt-auto" fill="none" stroke="#555" strokeWidth="2"><path d="M4 5.500L7.500 9 11 5.500" /></svg>
        </div>
      </div>
      <div className="flex h-4 items-center bg-[#f0f0f0]">
        <svg width="17" height="16" viewBox="0 0 17 16" fill="none" stroke="#555" strokeWidth="2"><path d="M10 4L6.500 7.500 10 11" /></svg>
        <div className="mb-px h-[15px] w-[952px] bg-[#cdcdcd]" />
        <svg width="17" height="16" viewBox="0 0 17 16" className="mr-4 ml-auto" fill="none" stroke="#555" strokeWidth="2"><path d="M5.500 4L9 7.500 5.500 11" /></svg>
      </div>
    </div>
  );
}

/* ---------- sheet tabs ---------- */
function SheetTabs() {
  const tab = "flex h-full shrink-0 items-center border-r border-[#c8c8c8] whitespace-nowrap";
  return (
    <div className={`flex h-[31px] border-t border-b border-[#c8c8c8] bg-[#e6e6e6] text-[12px] text-[#6c6c6c] ${BEN}`}>
      <div className={`${tab} w-[131px] pl-2 tracking-[0.3px]`}>
        <Icon size={12} className="mb-[3px]"><path d="M2.500 2.500v7a3.500 1.500 0 0 0 7 0v-7M2.500 2.500a3.500 1.500 0 0 1 7 0a3.500 1.500 0 0 1-7 0" /></Icon>
        <span className="ml-[4px]">Data Source</span>
      </div>
      <div className={`${tab} w-[201px] pl-[6px] tracking-[0.28px]`}>Revenue contribution % by cate...</div>
      <div className={`${tab} w-[176px] pl-[5px] tracking-[0.17px]`}>Successful Bookings By City</div>
      <div className={`${tab} w-[200px] pl-[5px] tracking-[0.1px]`}>Successful Bookings by Data wi...</div>
      <div className={`${tab} w-[62px] pl-[5px] tracking-[0.25px]`}>Revenue</div>
      <div className={`${tab} w-[135px] pl-[5px] tracking-[0.15px]`}>Successful Bookings</div>
      <div className={`${tab} w-[109px] pl-[5px] tracking-[0.4px]`}>Occupancy in %</div>
      <div className={`${tab} w-[200px] bg-[#fafafa] pl-[7px] font-bold tracking-[0.32px] text-[#585858]`}>
        <Icon size={11}><path d="M.5.500h10v10H.5zM5.500.500v10M.5 5.500h10" /></Icon>
        <span className="ml-[5px] pb-px">Radisson Hospitality Analys...</span>
      </div>
      <div className={`${tab} w-[56px] pl-[5px] tracking-[0px]`}>Sheet 13</div>
      <div className={`${tab} w-8 justify-center`}><Icon size={16}><path d="M9 10.500H1.500v-9h11v6M4.500 6v3M7 4.500V8M9.500 4v3" /><path d="M12 8v7M8.500 11.500h7" strokeWidth="1.600" /></Icon></div>
      <div className={`${tab} w-8 justify-center`}><Icon size={16}><path d="M8 11.500H1.500v-10h11v6M7 1.500v10M1.500 6.500h11" /><path d="M12 8v7M8.500 11.500h7" strokeWidth="1.600" /></Icon></div>
      <div className="flex flex-1 items-center justify-center"><Icon size={16}><path d="M8 12.500c-2-1-4-1-6-.5v-10c2-.5 4-.5 5.500.5 1.500-1 3-1 5-.5V7M7.500 2.500v9" /><path d="M12 8v7M8.500 11.500h7" strokeWidth="1.600" /></Icon></div>
    </div>
  );
}

function StatusBar() {
  return (
    <div className={`flex h-5 items-center bg-[#ebebeb] text-[11px] text-black ${BEN}`}>
      <div className="ml-auto flex h-full w-[127px] items-center border-r border-l border-[#c9c9c9] pl-[4px]">
        <Icon size={13} className="text-[#555]"><circle cx="6" cy="3.500" r="2.200" /><path d="M1.500 11.500V9c0-1.500 1-2 2-2h5c1 0 2 .5 2 2v2.500z" /></Icon>
        <span className="ml-[9px] pt-px tracking-[0px]">SNEHA A</span>
        <svg width="8" height="5" viewBox="0 0 8 5" className="mr-[6px] ml-auto"><path d="M0 0h8L4 4.500z" fill="#000" /></svg>
      </div>
      <div className="h-full w-[27px] border-r border-[#d2d2d2]" />
      <div className="h-full w-[27px] border-r border-[#d2d2d2]" />
      <div className="h-full w-[47px] border-r border-[#d2d2d2]" />
      <svg width="78" height="20" viewBox="0 0 78 20" fill="#666" className="border-r border-[#d2d2d2]">
        <path d="M9 6h1.500v7H9zM15 6v7l-4-3.500zM31 6v7l-4-3.500zM43 6v7l4-3.500zM57 6v7l4-3.500zM61.500 6H63v7h-1.500z" />
      </svg>
      <svg width="61" height="20" viewBox="0 0 61 20">
        <path d="M2 4h3v3H2zM6 4h3v3H6zM10 4h3v3h-3zM2 8h3v3H2zM6 8h3v3H6zM10 8h3v3h-3zM2 12h3v3H2zM6 12h3v3H6zM10 12h3v3h-3zM23 4h11v7H23zM23 12h3v3h-3zM27 12h3v3h-3zM31 12h3v3h-3z" fill="#bcbcbc" />
        <path d="M44 4h11v11H44z" fill="#666" />
      </svg>
    </div>
  );
}

/* ---------- taskbar ---------- */
function Task({ className = "", children, bar = "" }) {
  return (
    <div className={`flex h-full shrink-0 flex-col items-center ${className}`}>
      <div className="flex h-[38px] items-center pt-px">{children}</div>
      {bar && <div className={`h-[2px] ${bar}`} />}
    </div>
  );
}

function Taskbar() {
  return (
    <div className="flex h-10 bg-linear-to-r from-[#213942] via-[#1f2e40] via-60% to-[#1a2140] text-white">
      <Task className="w-12">
        <svg width="16" height="16" viewBox="0 0 16 16" fill="#fff"><path d="M0 2.200L6.800 1.200V7.500H0zM7.700 1.100L16 0V7.500H7.700zM0 8.400H6.800V14.800L0 13.800zM7.700 8.400H16V16L7.700 14.900z" /></svg>
      </Task>
      <div className="relative flex h-10 w-[288px] shrink-0 items-center overflow-hidden border border-[#bdbdbd] bg-[#f1f1f1]">
        <svg width="18" height="18" viewBox="0 0 18 18" fill="none" stroke="#222" strokeWidth="1.300" className="ml-[10px]"><circle cx="11" cy="6.500" r="5" /><path d="M7.300 10L1.500 16" /></svg>
        <span className="ml-[11px] text-[14.500px] leading-[38px] tracking-[-0.2px] text-[#333]">Type here to search</span>
        <svg width="78" height="38" viewBox="0 0 78 38" className="absolute right-0 bottom-0">
          <defs>
            <radialGradient id="globe" cx=".6" cy=".6" r=".62"><stop offset=".55" stopColor="#232823" /><stop offset=".8" stopColor="#25436d" /><stop offset="1" stopColor="#3c7fd0" /></radialGradient>
            <linearGradient id="halo" x1="0" x2="1"><stop offset="0" stopColor="#f1f1f1" /><stop offset=".5" stopColor="#fbd27a" /><stop offset="1" stopColor="#f3e6cc" /></linearGradient>
            <linearGradient id="rim" x1="0" x2="1"><stop offset=".2" stopColor="#7a6a50" stopOpacity="0" /><stop offset="1" stopColor="#b98a5e" /></linearGradient>
          </defs>
          <ellipse cx="46" cy="50" rx="48" ry="43" fill="#f6f6f6" stroke="url(#halo)" strokeWidth="2.500" />
          <ellipse cx="46" cy="50" rx="44" ry="39" fill="url(#globe)" />
          <path d="M46 11C62 11 74 17 84 30l-6 4C70 22 60 14 46 13z" fill="url(#rim)" />
          <path d="M60 38c3-6 12-7 18-3v3z" fill="#2b5fae" />
          <g fill="#e8bf3c">
            <circle cx="36" cy="29" r="4" /><circle cx="55" cy="28" r="2.500" /><circle cx="45" cy="37" r="3" /><circle cx="20" cy="33" r="2" /><circle cx="26" cy="24" r="1.400" /><circle cx="32" cy="19" r="1.200" /><circle cx="42" cy="20" r="1.200" /><circle cx="48" cy="27" r="1" /><circle cx="62" cy="26" r="1" /><circle cx="66" cy="22" r="1.300" /><circle cx="74" cy="30" r="1.200" /><circle cx="22" cy="28" r="1.200" /><circle cx="28" cy="32" r="1" /><circle cx="35" cy="15" r="1" /><circle cx="58" cy="34" r="1" />
          </g>
        </svg>
      </div>
      <Task className="w-12">
        <svg width="18" height="18" viewBox="0 0 18 18" fill="none" stroke="#fff" strokeWidth="1.200"><path d="M1.500 5.500h10v7h-10zM1.500 3.500V1.500M11.500 3.500V1.500M1.500 3h10M1.500 15h10M1.500 14.500v2M11.500 14.500v2M15.500 1.500v15" /><path d="M14 5.500h3v3h-3z" fill="#fff" stroke="none" /></svg>
      </Task>
      <Task className="w-[54px]">
        <svg width="24" height="24" viewBox="0 0 24 24">
          <defs>
            <linearGradient id="e1" x1="0" y1="0" x2="1" y2="0"><stop offset="0" stopColor="#1fa6e8" /><stop offset="1" stopColor="#60dd5c" /></linearGradient>
            <linearGradient id="e2" x1="0" y1="0" x2="1" y2="1"><stop offset="0" stopColor="#1591e2" /><stop offset="1" stopColor="#0c4da0" /></linearGradient>
          </defs>
          <path d="M.5 11C1 4 6 0 12.500 0 19.500 0 24 5 24 9.500c0 4-3 6-6 6-3.500 0-4-1.500-3-3 1.500-3-1.500-5.500-4.500-5.500C6 7 2 8.500.5 11z" fill="url(#e1)" />
          <path d="M.3 12C1.500 9 5 7 8.500 7c2 0 4 .5 5 1.500-5 0-6 6.500-2.500 10 3 3 7.500 2.500 10.500.5-2 3.500-5.500 5-9.500 5C5 24-.5 19 .3 12z" fill="url(#e2)" />
        </svg>
      </Task>
      <Task className="w-[42px]" bar="w-10 bg-[#5a8ccb]">
        <svg width="22" height="20" viewBox="0 0 22 20"><path d="M0 1.500L1 0h7l1.500 2H22v16H0z" fill="#e9a825" /><path d="M0 4h22v14.500H0z" fill="#fbd469" /><path d="M4 19v-7.500c0-1 .5-1.500 1.500-1.500h11c1 0 1.500.5 1.500 1.500V19h-3.500v-4h-7v4z" fill="#3b8fd6" /></svg>
      </Task>
      <Task className="w-[56px]">
        <svg width="24" height="24" viewBox="0 0 24 24"><path d="M6.500 6V2.500C6.500 1.500 7 1 8 1h8c1 0 1.500.5 1.500 1.500V6" fill="none" stroke="#28b4f0" strokeWidth="1.800" /><path d="M.5 5h23v15.500c0 1.500-1 2.500-2.500 2.500H3C1.500 23 .5 22 .5 20.500z" fill="#f4f6f8" /><path d="M7 9h4.500v4.500H7z" fill="#e8402a" /><path d="M12.500 9H17v4.500h-4.500z" fill="#6bb52c" /><path d="M7 14.500h4.500V19H7z" fill="#1ea0ea" /><path d="M12.500 14.500H17V19h-4.500z" fill="#f8b916" /></svg>
      </Task>
      <Task className="w-[44px]">
        <svg width="24" height="22" viewBox="0 0 24 22"><path d="M0 8.500L12 0l12 8.500z" fill="#1168b8" /><path d="M1 9h22v4l-11 6z" fill="#eef6fc" /><path d="M0 8.500l12 7.500L24 8.500V22H0z" fill="#35b0f2" /><path d="M0 8.500V22h2L15 14l-3 2z" fill="#1b8ddd" /><path d="M2 8.500h20L12 14.500z" fill="#f1f7fb" /></svg>
      </Task>
      <Task className="w-[52px]">
        <svg width="22" height="20" viewBox="0 0 22 20"><path d="M6 1l14 1v17l-14-1z" fill="#4e8fc0" /><path d="M2 1h14v17H2z" fill="#76b2dc" stroke="#a8d0ea" /><ellipse cx="9" cy="9.500" rx="6" ry="7" fill="#ef7c28" stroke="#e9eef2" strokeWidth="1" /><path d="M7 5.500l5.500 4L7 13.500z" fill="#fff" /></svg>
      </Task>
      <Task className="w-[46px]">
        <svg width="22" height="22" viewBox="0 0 22 22"><rect width="22" height="22" rx="4" fill="#fff" /><circle cx="11" cy="11" r="8.200" fill="#1f97d4" /><path d="M14.500 4.500L8.500 7.500c-1.500 1-1 2.200.5 2.700l4 1.300c1.500.7 1.500 2 0 3L8 17.500" stroke="#fff" strokeWidth="1.700" fill="none" /></svg>
      </Task>
      <Task className="ml-[2px] w-[50px]" bar="w-10 bg-[#5a8ccb]">
        <svg width="24" height="24" viewBox="0 0 24 24"><circle cx="12" cy="12" r="11" fill="#e8541c" /><path d="M12 1c6 0 11 5 11 11 0 4-2 7-4 9l-3-9z" fill="#f6a321" /><circle cx="12" cy="10.500" r="7.200" fill="#1d5f9f" /><path d="M7 5c3-1.500 8-2 11 2-3-1-5 0-5 2l-3 1z" fill="#3ba4da" /><path d="M2 6c2 1 4 1 6 1l2 3-3 2c1 4 6 5 10 2-2 5-7 6-11 4S1 11 2 6z" fill="#e04a1a" /></svg>
      </Task>
      <Task className="w-[48px] bg-[#4f6069]" bar="w-12 bg-[#6aa0e0]">
        <div className="flex h-[22px] w-[22px] items-center justify-center bg-[#f7fafc]"><TableauMark size={20} weight={1.1} className="text-[#4b86a8]" /></div>
      </Task>
      <Task className="w-[50px]" bar="w-10 bg-[#5a8ccb]">
        <svg width="24" height="22" viewBox="0 0 24 22"><path d="M9 1l14 1-4 18-3 1z" fill="#4a5a60" /><path d="M8 1h13l-5 20L2 19z" fill="#a4d4e2" /><path d="M8 1h13l-1 3H7z" fill="#dff0f5" /><path d="M2 19l8-7 7 5-1 4z" fill="#6aa9bd" /></svg>
      </Task>
      <Task className="ml-px w-[46px]" bar="w-10 bg-[#5a8ccb]">
        <svg width="24" height="24" viewBox="0 0 24 24"><circle cx="12" cy="12" r="11.500" fill="#31a952" /><path d="M12 12L2.040 6.250A11.500 11.500 0 0 1 21.960 6.250z" fill="#e94234" /><path d="M2.040 6.250L7.500 14.500 12 12z" fill="#e94234" /><path d="M12 7h10.400A11.500 11.500 0 0 1 11.500 23.500L16.500 14.500z" fill="#fbbc05" /><path d="M12 6.500h10.100l-5 7z" fill="#fbbc05" /><path d="M12 .5A11.500 11.500 0 0 1 22.300 7H12z" fill="#e94234" /><circle cx="12" cy="12" r="5.500" fill="#fff" /><circle cx="12" cy="12" r="4.300" fill="#4285f4" /></svg>
      </Task>
      <div className="ml-auto flex items-center">
        <svg width="22" height="22" viewBox="0 0 22 22" className="shrink-0"><circle cx="11" cy="11" r="10" fill="#0f8fd8" stroke="#fff" strokeWidth="1.800" /><text x="11" y="16.500" textAnchor="middle" fontFamily="Open Sans, sans-serif" fontWeight="700" fontSize="16" fill="#fff">?</text></svg>
        <svg width="20" height="20" viewBox="0 0 20 20" className="ml-8 shrink-0"><defs><linearGradient id="sun" x1="0" y1="0" x2="1" y2="1"><stop offset="0" stopColor="#fbb12c" /><stop offset="1" stopColor="#f0620e" /></linearGradient></defs><circle cx="10" cy="10" r="10" fill="url(#sun)" /></svg>
        <span className="ml-[10px] w-[54px] text-[13.500px] tracking-[-0.4px]">34°C</span>
        <svg width="94" height="20" viewBox="0 0 94 20" fill="none" stroke="#fff" strokeWidth="1.200">
          <path d="M2 13l5-5 5 5" />
          <path d="M26.500 7h7v6.500h-7zM33.500 9.500l3-1.500v5l-3-1.500M28 4.500c2-1.500 5-1.500 7 0M28 16.500c2 1.500 5 1.500 7 0" />
          <path d="M47.500 8.500h2.500l4-3.500v10.500l-4-3.500h-2.500zM56.500 8c1 1.500 1 3 0 4.500M59 6.500c2 2.500 2 5 0 7.500M61.500 5c2.500 3 2.500 7 0 10.500" />
          <path d="M75.500 6.500h11v8h-11zM79 17.500h6M82 14.500v3" /><path d="M71.500 3.500h4v5h-4z" fill="#1b2540" />
        </svg>
        <div className="ml-[1px] flex w-[62px] flex-col items-center text-[12px] leading-[18px] tracking-[-0.45px]">
          <span>12:29</span>
          <span>12-04-2023</span>
        </div>
        <svg width="27" height="26" viewBox="0 0 27 26" className="mt-[3px] mr-[11px] ml-[14px]">
          <path d="M1 2h16v12H8l-3 4v-4H1z" fill="#fff" /><path d="M3 5.500h12M3 8h12M3 10.500h8" stroke="#1b2540" />
          <circle cx="16.500" cy="15.500" r="8" fill="#3a3d44" stroke="#888" /><text x="16.500" y="20" textAnchor="middle" fontFamily="Open Sans, sans-serif" fontSize="12.500" fill="#fff">4</text>
        </svg>
      </div>
      <div className="h-full w-[4px] border-l border-[#6b7285]" />
    </div>
  );
}

export default function App() {
  return (
    <div className={`flex h-[768px] w-[1366px] flex-col overflow-hidden bg-white ${SEG}`}>
      <TitleBar />
      <MenuBar />
      <Toolbar />
      <div className="flex h-[593px]">
        <LeftPanel />
        <Canvas />
      </div>
      <SheetTabs />
      <StatusBar />
      <Taskbar />
    </div>
  );
}
